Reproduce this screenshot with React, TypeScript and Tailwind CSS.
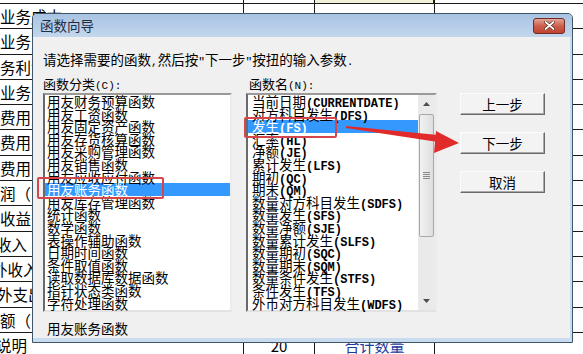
import React from "react";

const sheetRows = [
  { a: "业务成本", cls: "" },
  { a: "业务", cls: "" },
  { a: "务利润", cls: "" },
  { a: "业务", cls: "" },
  { a: "费用", cls: "" },
  { a: "费用", cls: "" },
  { a: "费用", cls: "" },
  { a: "润（", cls: "" },
  { a: "收益", cls: "" },
  { a: "收入", cls: "-ml-[4px]" },
  { a: "外收入", cls: "-ml-[8px]" },
  { a: "外支出", cls: "-ml-[3px]" },
  { a: "额（", cls: "" },
  { a: "说明", cls: "-ml-[4px]" },
];

const categories = [
  "用友财务预算函数",
  "用友工资函数",
  "用友固定资产函数",
  "用友存货核算函数",
  "用友采购管理函数",
  "用友销售函数",
  "用友应收应付函数",
  "用友账务函数",
  "用友库存管理函数",
  "统计函数",
  "数学函数",
  "表操作辅助函数",
  "日期时间函数",
  "条件取值函数",
  "读取数据库数据函数",
  "指针状态类函数",
  "字符处理函数",
];

const functions = [
  ["当前日期", "(CURRENTDATE)"],
  ["对方科目发生", "(DFS)"],
  ["发生", "(FS)"],
  ["汇率", "(HL)"],
  ["净额", "(JE)"],
  ["累计发生", "(LFS)"],
  ["期初", "(QC)"],
  ["期末", "(QM)"],
  ["数量对方科目发生", "(SDFS)"],
  ["数量发生", "(SFS)"],
  ["数量净额", "(SJE)"],
  ["数量累计发生", "(SLFS)"],
  ["数量期初", "(SQC)"],
  ["数量期末", "(SQM)"],
  ["数量条件发生", "(STFS)"],
  ["条件发生", "(TFS)"],
  ["外币对方科目发生", "(WDFS)"],
];

function SheetCells({ a, cls, last }: { a: string; cls: string; last?: boolean }) {
  return (
    <>
      <div className="w-[32px] shrink-0 whitespace-nowrap text-[15.5px] leading-[25px] text-black">
        <span className={cls}>{a}</span>
      </div>
      <div className="w-[212px] shrink-0 border-r border-[#1a1a1a]" />
      <div className="w-[71px] shrink-0 border-r border-[#1a1a1a] text-center text-[15px] leading-[25px]">
        {last ? "20" : ""}
      </div>
      <div className="w-[120px] shrink-0 border-r border-[#1a1a1a] text-center text-[15px] leading-[25px] text-[#1b3c9c]">
        {last ? "合计数量" : ""}
      </div>
      <div className="flex-1" />
    </>
  );
}

function Button({ label }: { label: string }) {
  return (
    <div className="flex h-[22px] w-[85px] items-center justify-center border border-t-[#fcfcfc] border-l-[#fcfcfc] border-r-[#6a6a6a] border-b-[#6a6a6a] bg-[#f3f3f3] text-[13.5px] text-black shadow-[inset_-1px_-1px_0_#a9a9a9]">
      {label}
    </div>
  );
}

export default function App() {
  return (
    <div className="relative h-[354px] w-[583px] overflow-hidden bg-white font-['Noto_Sans_CJK_SC',sans-serif]">
      {/* spreadsheet behind the dialog */}
      <div className="flex flex-col">
        <div className="flex h-[4px] border-b border-[#1a1a1a]">
          <div className="w-[244px] shrink-0 border-r border-[#1a1a1a]" />
          <div className="w-[71px] shrink-0 border-r border-[#1a1a1a]" />
          <div className="w-[120px] shrink-0 border-r-2 border-[#1a1a1a] bg-[#f4f0d8]" />
        </div>
        {sheetRows.map((r, i) => (
          <div key={i} className="flex h-[25.3px] shrink-0 border-b border-[#1a1a1a]">
            <SheetCells a={r.a} cls={r.cls} last={i === sheetRows.length - 1} />
          </div>
        ))}
      </div>

      {/* dialog window */}
      <div className="absolute left-[32px] top-[13px] flex h-[330px] w-[541px] flex-col rounded-t-[5px] border border-[#3f5668] bg-[#c9dcef]">
        <div className="flex h-[23px] shrink-0 items-center justify-between rounded-t-[4px] bg-gradient-to-b from-[#a8c3e2] to-[#c3d7ed] pl-[7px] pr-[7px]">
          <span className="text-[13.5px] text-[#1d2d44]">函数向导</span>
          <div className="flex h-[16px] w-[32px] items-center justify-center rounded-[3px] border border-[#6e2c24] bg-gradient-to-b from-[#e3a497] via-[#cd5e4c] to-[#c1412f]">
            <svg width="11" height="9" viewBox="0 0 11 9">
              <path d="M1.5 1 L9.5 8 M9.5 1 L1.5 8" stroke="#4a1a14" strokeWidth="3" strokeLinecap="round" />
              <path d="M1.5 1 L9.5 8 M9.5 1 L1.5 8" stroke="#ffffff" strokeWidth="1.8" strokeLinecap="round" />
            </svg>
          </div>
        </div>

        <div className="mb-[4px] mr-[2px] flex flex-1 flex-col bg-[#f0f0f0] pl-[10px] pt-[15px] text-black">
          <p className="h-[15px] whitespace-nowrap text-[13.5px] leading-[15px]">
            请选择需要的函数<span className="font-['Liberation_Mono',monospace] text-[11.3px]">,</span>然后按
            <span className="font-['Liberation_Mono',monospace] text-[11.3px]">"</span>下一步
            <span className="font-['Liberation_Mono',monospace] text-[11.3px]">"</span>按扭的输入参数
            <span className="font-['Liberation_Mono',monospace] text-[11.3px]">.</span>
          </p>

          <div className="mt-[9px] flex">
            {/* categories */}
            <div className="w-[189px] shrink-0">
              <div className="h-[15px] text-[13px] leading-[15px]">
                函数分类<span className="font-['Liberation_Mono',monospace] text-[11px]">(C):</span>
              </div>
              <div className="relative mt-[2px] h-[219px] border-2 border-t-[#9a9a9a] border-l-[#6a6a6a] border-r-[#ececec] border-b-[#e2e2e2] bg-white">
                {categories.map((c, i) => (
                  <div
                    key={c}
                    className={
                      i === 7
                        ? "h-[12.6px] whitespace-nowrap bg-[#3399ff] pl-[2px] text-[13.5px] leading-[12.6px] text-white"
                        : "h-[12.6px] whitespace-nowrap pl-[2px] text-[13.5px] leading-[12.6px]"
                    }
                  >
                    {c}
                  </div>
                ))}
                <div className="absolute left-[-8px] top-[82px] h-[22px] w-[127px] rounded-[2px] border-2 border-[#d4464a]" />
              </div>
            </div>

            {/* functions */}
            <div className="ml-[14px] w-[191px] shrink-0">
              <div className="h-[15px] pl-[3px] text-[13px] leading-[15px]">
                函数名<span className="font-['Liberation_Mono',monospace] text-[11px]">(N):</span>
              </div>
              <div className="relative mt-[2px] flex h-[219px] border-2 border-t-[#9a9a9a] border-l-[#6a6a6a] border-r-[#ececec] border-b-[#e2e2e2] bg-white">
                <div className="flex-1">
                  {functions.map(([cn, en], i) => (
                    <div
                      key={cn}
                      className={
                        i === 2
                          ? "h-[12.6px] whitespace-nowrap bg-[#3399ff] pl-[4px] text-[13.5px] leading-[12.6px] text-white"
                          : "h-[12.6px] whitespace-nowrap pl-[4px] text-[13.5px] leading-[12.6px]"
                      }
                    >
                      {cn}
                      <span className="font-['Liberation_Mono',monospace] text-[12px] font-bold">{en}</span>
                    </div>
                  ))}
                </div>
                <div className="flex w-[17px] shrink-0 flex-col bg-[#eaeaea]">
                  <div className="flex h-[18px] items-center justify-center">
                    <svg width="7" height="4" viewBox="0 0 7 4">
                      <path d="M0 4 L3.5 0 L7 4 Z" fill="#4d4d4d" />
                    </svg>
                  </div>
                  <div className="mx-[1px] mt-[1px] flex h-[123px] items-center justify-center rounded-[2px] border border-[#a8a8a8] bg-gradient-to-r from-[#f2f2f2] to-[#dedede]">
                    <div className="flex w-[7px] flex-col gap-[1px]">
                      <div className="h-px bg-[#8a8a8a]" />
                      <div className="h-px bg-[#8a8a8a]" />
                      <div className="h-px bg-[#8a8a8a]" />
                      <div className="h-px bg-[#8a8a8a]" />
                    </div>
                  </div>
                  <div className="flex-1" />
                  <div className="flex h-[18px] items-center justify-center">
                    <svg width="7" height="4" viewBox="0 0 7 4">
                      <path d="M0 0 L3.5 4 L7 0 Z" fill="#4d4d4d" />
                    </svg>
                  </div>
                </div>
                <div className="absolute left-[-4px] top-[22px] h-[21px] w-[93px] rounded-[2px] border-2 border-[#d4464a]" />
              </div>
            </div>

            {/* buttons */}
            <div className="ml-[23px] flex flex-col gap-[17px] pt-[17px]">
              <Button label="上一步" />
              <Button label="下一步" />
              <Button label="取消" />
            </div>
          </div>

          <div className="mt-[9px] h-[15px] pl-[4px] text-[13.5px] leading-[15px]">用友账务函数</div>
        </div>
      </div>

      {/* red annotation arrow */}
      <svg className="pointer-events-none absolute left-0 top-0" width="583" height="354" viewBox="0 0 583 354">
        <polygon points="346,126 438,135 438,142 346,128" fill="#e12b2b" />
        <polygon points="436,131 459,143 434,153" fill="#e12b2b" />
      </svg>
    </div>
  );
}
